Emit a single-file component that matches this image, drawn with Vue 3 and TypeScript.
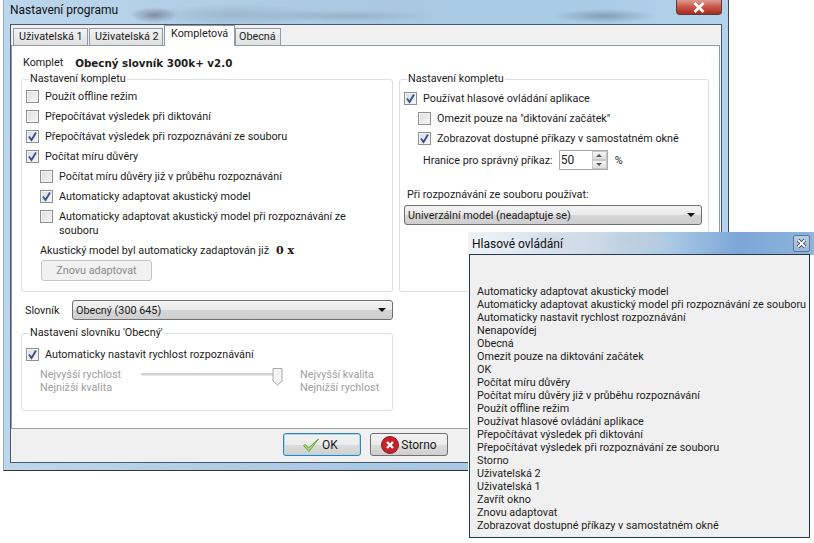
<script setup lang="ts">
interface Row { label: string; checked: boolean; sub?: boolean; two?: boolean }
const leftRows: Row[] = [
  { label: 'Použít offline režim', checked: false },
  { label: 'Přepočítávat výsledek při diktování', checked: false },
  { label: 'Přepočítávat výsledek při rozpoznávání ze souboru', checked: true },
  { label: 'Počítat míru důvěry', checked: true },
  { label: 'Počítat míru důvěry již v průběhu rozpoznávání', checked: false, sub: true },
  { label: 'Automaticky adaptovat akustický model', checked: true, sub: true },
  { label: 'Automaticky adaptovat akustický model při rozpoznávání ze souboru', checked: false, sub: true, two: true },
]
const rightRows: Row[] = [
  { label: 'Používat hlasové ovládání aplikace', checked: true },
  { label: 'Omezit pouze na "diktování začátek"', checked: false, sub: true },
  { label: 'Zobrazovat dostupné příkazy v samostatném okně', checked: true, sub: true },
]
const tabs = ['Uživatelská 1', 'Uživatelská 2', 'Kompletová', 'Obecná']
const commands = [
  'Automaticky adaptovat akustický model',
  'Automaticky adaptovat akustický model při rozpoznávání ze souboru',
  'Automaticky nastavit rychlost rozpoznávání',
  'Nenapovídej',
  'Obecná',
  'Omezit pouze na diktování začátek',
  'OK',
  'Počítat míru důvěry',
  'Počítat míru důvěry již v průběhu rozpoznávání',
  'Použít offline režim',
  'Používat hlasové ovládání aplikace',
  'Přepočítávat výsledek při diktování',
  'Přepočítávat výsledek při rozpoznávání ze souboru',
  'Storno',
  'Uživatelská 2',
  'Uživatelská 1',
  'Zavřít okno',
  'Znovu adaptovat',
  'Zobrazovat dostupné příkazy v samostatném okně',
]
</script>

<template>
  <div class="desktop">
    <section class="win main-win">
      <div class="title">Nastavení programu</div>
      <div class="close-main">
        <svg width="14" height="11" viewBox="0 0 14 11"><path d="M2.5 1 L11.5 10 M11.5 1 L2.5 10" stroke="#fff" stroke-width="2.6" /></svg>
      </div>
      <div class="client">
        <div class="tabs">
          <div v-for="(t, i) in tabs" :key="t" class="tab" :class="{ active: i === 2 }">{{ t }}</div>
        </div>
        <div class="panel">
          <div class="komplet"><span>Komplet</span><b>Obecný slovník 300k+ v2.0</b></div>
          <div class="cols">
            <div class="col-left">
              <fieldset class="group g1">
                <legend>Nastavení kompletu</legend>
                <div v-for="r in leftRows" :key="r.label" class="row" :class="{ sub: r.sub, two: r.two }">
                  <span class="cb" :class="{ on: r.checked }">
                    <svg v-if="r.checked" width="11" height="11" viewBox="0 0 11 11"><path d="M2 5.5 L4.5 9 L9 1.5" fill="none" stroke="#3b4f81" stroke-width="1.8" /></svg>
                  </span>
                  <span class="lbl">{{ r.label }}</span>
                </div>
                <div class="adapted"><span>Akustický model byl automaticky zadaptován již</span><b>0 x</b></div>
                <div class="btn-disabled">Znovu adaptovat</div>
              </fieldset>
              <div class="dict">
                <span>Slovník</span>
                <div class="select"><span>Obecný (300 645)</span><i class="arrow"></i></div>
              </div>
              <fieldset class="group g2">
                <legend>Nastavení slovníku 'Obecný'</legend>
                <div class="row">
                  <span class="cb on"><svg width="11" height="11" viewBox="0 0 11 11"><path d="M2 5.5 L4.5 9 L9 1.5" fill="none" stroke="#3b4f81" stroke-width="1.8" /></svg></span>
                  <span class="lbl">Automaticky nastavit rychlost rozpoznávání</span>
                </div>
                <div class="speed">
                  <div class="speed-label">Nejvyšší rychlost<br />Nejnižší kvalita</div>
                  <div class="track">
                    <svg class="thumb" width="11" height="19" viewBox="0 0 11 19"><path d="M1 1.5 H10 V14 L5.5 18 L1 14 Z" fill="#f4f4f4" stroke="#a8a8a8" /></svg>
                  </div>
                  <div class="speed-label">Nejvyšší kvalita<br />Nejnižší rychlost</div>
                </div>
              </fieldset>
            </div>
            <fieldset class="group g3">
              <legend>Nastavení kompletu</legend>
              <div v-for="r in rightRows" :key="r.label" class="row" :class="{ sub: r.sub }">
                <span class="cb" :class="{ on: r.checked }">
                  <svg v-if="r.checked" width="11" height="11" viewBox="0 0 11 11"><path d="M2 5.5 L4.5 9 L9 1.5" fill="none" stroke="#3b4f81" stroke-width="1.8" /></svg>
                </span>
                <span class="lbl">{{ r.label }}</span>
              </div>
              <div class="limit">
                <span>Hranice pro správný příkaz:</span>
                <div class="spin">
                  <span>50</span>
                  <div class="spin-btns">
                    <i class="up"></i>
                    <i class="down"></i>
                  </div>
                </div>
                <span class="pct">%</span>
              </div>
              <div class="use-label">Při rozpoznávání ze souboru používat:</div>
              <div class="select wide"><span>Univerzální model (neadaptuje se)</span><i class="arrow"></i></div>
            </fieldset>
          </div>
        </div>
        <div class="footer">
          <div class="btn ok">
            <svg width="18" height="16" viewBox="0 0 18 16"><path d="M1.5 8.5 L3.5 7.5 L6.5 11 L16.5 2 L7 14.5 Z" fill="#a5dd7c" stroke="#5fa83c" stroke-width="1" stroke-linejoin="round" /></svg>
            <span>OK</span>
          </div>
          <div class="btn">
            <svg width="18" height="18" viewBox="0 0 18 18"><circle cx="9" cy="9" r="8.5" fill="#c4222c" stroke="#8e1a20" /><path d="M6 6 L12 12 M12 6 L6 12" stroke="#fff" stroke-width="2.4" /></svg>
            <span>Storno</span>
          </div>
        </div>
      </div>
    </section>

    <section class="win voice-win">
      <div class="title voice-title">Hlasové ovládání</div>
      <div class="close-small">
        <svg width="11" height="11" viewBox="0 0 11 11"><path d="M2 2 L9 9 M9 2 L2 9" stroke="#26384e" stroke-width="3.4" /><path d="M2 2 L9 9 M9 2 L2 9" stroke="#fff" stroke-width="1.8" /></svg>
      </div>
      <div class="voice-client">
        <div v-for="c in commands" :key="c" class="cmd">{{ c }}</div>
      </div>
    </section>
  </div>
</template>

<style>
html, body { margin: 0; background: #fff; }
</style>

<style scoped>
.desktop {
  position: relative;
  width: 814px;
  height: 543px;
  overflow: hidden;
  background: #fff;
  font-family: Roboto, "Liberation Sans", sans-serif;
  font-size: 10.8px;
  color: #1c1c1c;
}
.win { position: absolute; box-sizing: border-box; }
.main-win {
  left: 3px;
  top: 0;
  width: 726px;
  height: 471px;
  padding: 0 6px 7px 6px;
  border-bottom: 1px solid #333;
  border-right: 1px solid #39495a;
  border-left: 1px solid #8fb1d0;
  background:
    radial-gradient(ellipse 24px 8px at 150px 15px, rgba(90,100,120,.6), transparent),
    radial-gradient(ellipse 90px 11px at 230px 15px, rgba(120,140,165,.35), transparent),
    radial-gradient(ellipse 90px 6px at 340px 16px, rgba(110,125,140,.3), transparent),
    radial-gradient(ellipse 50px 7px at 600px 16px, rgba(95,115,135,.5), transparent),
    linear-gradient(90deg, #bcd6ec 0%, #a9c8e2 50%, #a8cbe6 80%, #b4d2ec 100%);
}
.title {
  height: 24px;
  box-sizing: border-box;
  padding: 3px 0 0 0;
  font-size: 12px;
  line-height: 14px;
  color: #111;
}
.close-main {
  position: absolute;
  right: 6px;
  top: 0;
  width: 46px;
  height: 15px;
  display: flex;
  align-items: center;
  justify-content: center;
  box-sizing: border-box;
  border: 1px solid #5e3a38;
  border-top: 0;
  border-radius: 0 0 4px 4px;
  background: linear-gradient(#dd9b8e, #c8574a 50%, #a62a20);
}
.client {
  box-sizing: border-box;
  height: 439px;
  border: 1px solid #46586a;
  background: #f0f0f0;
  display: flex;
  flex-direction: column;
}
.tabs {
  display: flex;
  align-items: flex-end;
  height: 20px;
  padding-left: 2px;
  gap: 1px;
  position: relative;
  z-index: 1;
}
.tab {
  box-sizing: border-box;
  height: 17px;
  line-height: 16px;
  padding: 0 5px;
  white-space: nowrap;
  border: 1px solid #8e9ba8;
  border-bottom: 0;
  background: linear-gradient(#f3f3f3, #e0e0e0);
  margin-bottom: 0;
}
.tab:nth-child(1) { width: 75px; }
.tab:nth-child(2) { width: 74px; }
.tab:nth-child(4) { width: 46px; margin-left: -1px; padding: 0 3px; }
.tab.active {
  width: 71px;
  height: 21px;
  line-height: 15px;
  padding: 0 6px 4px;
  background: #fff;
  margin-bottom: -1px;
}
.panel {
  box-sizing: border-box;
  height: 383px;
  width: 709px;
  background: #fff;
  border: 1px solid #8e9ba8;
  border-bottom: 0;
  padding: 10px 0 0 9px;
}
.komplet { height: 14px; line-height: 14px; padding-left: 2px; display: flex; gap: 12px; }
.komplet b { font-family: "DejaVu Sans", sans-serif; font-size: 10.3px; }
.cols { display: grid; grid-template-columns: 372px 310px; gap: 6px; margin-top: 2px; }
.group {
  margin: 0;
  padding: 0 4px;
  min-width: 0;
  box-sizing: border-box;
  border: 1px solid #dcdfe3;
  border-radius: 3px;
}
.group legend { padding: 0 1px 0 1px; margin-left: 3px; line-height: 14px; height: 14px; }
.g1 { height: 220px; padding-top: 1px; }
.g2 { height: 85px; padding-top: 5px; }
.g3 { height: 220px; padding-top: 3px; }
.row { display: flex; align-items: flex-start; height: 20px; }
.row.sub { padding-left: 14px; }
.row.two { height: 33px; }
.cb {
  flex: none;
  box-sizing: border-box;
  width: 13px;
  height: 13px;
  margin-top: 3px;
  margin-right: 6px;
  border: 1px solid #8e8f8f;
  background: linear-gradient(135deg, #dedede, #f6f6f6);
  box-shadow: inset 0 0 0 1px #f4f4f4;
  display: flex;
  align-items: center;
  justify-content: center;
}
.cb.on { background: linear-gradient(135deg, #d8dcec, #f4f5fa); }
.lbl { line-height: 14px; padding-top: 3px; }
.adapted { display: flex; gap: 7px; height: 14px; line-height: 14px; margin: 4px 0 0 14px; }
.adapted b { font-family: "DejaVu Serif", serif; font-size: 11px; }
.btn-disabled {
  box-sizing: border-box;
  width: 111px;
  height: 21px;
  margin: 2px 0 0 15px;
  border: 1px solid #c4c4c4;
  border-radius: 3px;
  background: #f1f1f1;
  color: #8a8a8a;
  text-align: center;
  line-height: 19px;
}
.dict { display: flex; align-items: center; height: 20px; margin: 8px 0 6px 4px; }
.dict > span { width: 47px; }
.select {
  flex: 1;
  box-sizing: border-box;
  height: 20px;
  border: 1px solid #707070;
  border-radius: 3px;
  background: linear-gradient(#f3f3f3 0%, #e9e9e9 50%, #d5d5d5 52%, #cfcfcf 100%);
  display: flex;
  align-items: center;
  justify-content: space-between;
  padding: 0 6px 0 3px;
}
.arrow { width: 0; height: 0; border: 4px solid transparent; border-top: 4px solid #111; border-bottom: 0; }
.speed { display: flex; align-items: flex-start; padding: 0 0 0 14px; margin-top: 3px; color: #a0a0a0; }
.speed-label { line-height: 13px; width: 101px; }
.speed-label:last-child { width: auto; }
.track {
  position: relative;
  width: 140px;
  height: 2px;
  margin: 5px 19px 0 0;
  background: #d4d4d4;
  border-bottom: 1px solid #e8e8e8;
}
.thumb { position: absolute; right: -2px; top: -6px; }
.limit { display: flex; align-items: center; height: 20px; padding-left: 19px; margin-top: 1px; }
.spin {
  box-sizing: border-box;
  width: 49px;
  height: 20px;
  margin-left: 6px;
  border: 1px solid #ababab;
  background: #fff;
  display: flex;
  align-items: center;
  justify-content: space-between;
  padding-left: 1px;
  font-size: 12px;
}
.spin-btns { width: 15px; height: 18px; display: flex; flex-direction: column; gap: 0; }
.spin-btns i { flex: 1; display: flex; background: linear-gradient(#f6f6f6, #dcdcdc); border: 1px solid #c8c8c8; position: relative; }
.spin-btns i::after { content: ""; position: absolute; left: 3px; top: 2px; border: 3px solid transparent; }
.spin-btns .up::after { border-bottom: 3px solid #556; border-top: 0; }
.spin-btns .down::after { border-top: 3px solid #556; border-bottom: 0; }
.pct { margin-left: 7px; }
.use-label { margin: 18px 0 3px 3px; line-height: 14px; }
.select.wide { width: 298px; flex: none; }
.footer {
  flex: 1;
  display: flex;
  justify-content: flex-end;
  align-items: flex-start;
  gap: 9px;
  padding: 4px 273px 0 0;
  background: #f0f0f0;
  border-top: 1px solid #a0a0a0;
}
.btn {
  box-sizing: border-box;
  width: 78px;
  height: 23px;
  border: 1px solid #707070;
  border-radius: 3px;
  background: linear-gradient(#f3f3f3 0%, #ebebeb 50%, #dcdcdc 52%, #cfcfcf 100%);
  display: flex;
  align-items: center;
  justify-content: center;
  gap: 2px;
  font-size: 12px;
}
.btn.ok { border-color: #3c7fb1; box-shadow: inset 0 0 0 1px #9fdcf5; padding-right: 4px; }
.voice-win {
  left: 468px;
  top: 232px;
  width: 346px;
  height: 311px;
  padding: 0 4px 0 1px;
  background:
    radial-gradient(ellipse 30px 12px at 85px 10px, rgba(205,215,228,.9), transparent),
    radial-gradient(ellipse 40px 14px at 170px 10px, rgba(190,205,220,.8), transparent),
    linear-gradient(90deg, #eef3f8 0%, #c9d8e6 40%, #a6c7e4 60%, #7ba6d6 78%, #8fb5de 100%) top / 100% 23px no-repeat,
    #fff;
}
.voice-title { padding: 5px 0 0 3px; height: 22px; color: #111; font-size: 12px; }
.close-small {
  position: absolute;
  right: 4px;
  top: 3px;
  box-sizing: border-box;
  width: 17px;
  height: 17px;
  border: 1px solid #5d7795;
  border-radius: 2px;
  background: linear-gradient(#b9cde2, #9ab7d6);
  display: flex;
  align-items: center;
  justify-content: center;
}
.voice-client {
  box-sizing: border-box;
  height: 284px;
  border: 1px solid #26384e;
  background: #f0f0f0;
  padding: 30px 0 0 7px;
}
.cmd { height: 13px; line-height: 13px; white-space: nowrap; }
</style>
